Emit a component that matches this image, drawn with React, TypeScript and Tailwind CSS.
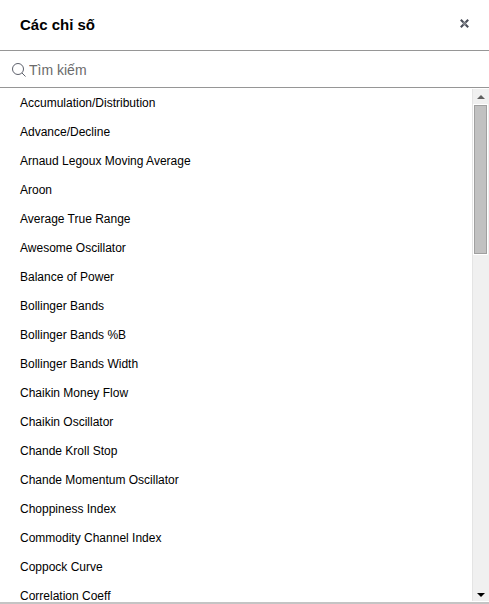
import { useRef, useState } from 'react';

const INDICATORS = [
  'Accumulation/Distribution',
  'Advance/Decline',
  'Arnaud Legoux Moving Average',
  'Aroon',
  'Average True Range',
  'Awesome Oscillator',
  'Balance of Power',
  'Bollinger Bands',
  'Bollinger Bands %B',
  'Bollinger Bands Width',
  'Chaikin Money Flow',
  'Chaikin Oscillator',
  'Chande Kroll Stop',
  'Chande Momentum Oscillator',
  'Choppiness Index',
  'Commodity Channel Index',
  'Coppock Curve',
  'Correlation Coeff',
];

function SearchIcon() {
  return (
    <svg width="14" height="14" viewBox="0 0 14 14" fill="none" stroke="#5d606b" aria-hidden="true">
      <circle cx="6" cy="6" r="5.5" />
      <path d="M10 10l3.5 3.5" />
    </svg>
  );
}

function CloseIcon() {
  return (
    <svg width="9" height="9" viewBox="0 0 9 9" aria-hidden="true">
      <path d="M0.8 0.8l7.4 7.4M8.2 0.8l-7.4 7.4" stroke="#4a4e59" strokeWidth="2.1" />
      <path d="M3 3l3 3M6 3l-3 3" stroke="#85888f" strokeWidth="1.2" />
    </svg>
  );
}

export default function App() {
  const [open, setOpen] = useState(true);
  const [query, setQuery] = useState('');
  const listRef = useRef<HTMLUListElement>(null);

  const items = INDICATORS.filter(name => name.toLowerCase().includes(query.toLowerCase()));

  const scrollList = (delta: number) => {
    listRef.current?.scrollBy({ top: delta });
  };

  if (!open) return null;

  return (
    <div className="flex h-screen flex-col border-b-2 border-[#c4c4c4] bg-white font-['Liberation_Sans',Arial,sans-serif] text-black">
      <header className="flex items-center justify-between border-b border-[#969696] px-5 py-3">
        <h1 className="text-[15px] leading-[26px] font-bold">Các chỉ số</h1>
        <button type="button" aria-label="Đóng" onClick={() => setOpen(false)} className="pb-1">
          <CloseIcon />
        </button>
      </header>

      <label className="flex items-center gap-[3px] border-b border-[#969696] pt-[9px] pr-5 pb-[7px] pl-3">
        <SearchIcon />
        <input
          type="text"
          aria-label="Tìm kiếm"
          placeholder="Tìm kiếm"
          value={query}
          onChange={e => setQuery(e.target.value)}
          className="min-w-0 flex-1 text-sm leading-5 outline-none placeholder:text-[#6b6b6b]"
        />
      </label>

      <div className="flex min-h-0 flex-1 py-px">
        <ul ref={listRef} className="min-w-0 flex-1 overflow-y-auto [scrollbar-width:none]">
          {items.map(name => (
            <li key={name}>
              <button type="button" className="block w-full px-5 text-left text-[12px] leading-[29px]">
                {name}
              </button>
            </li>
          ))}
        </ul>

        {/* Scroll track */}
        <div className="flex w-[17px] flex-col border-l border-[#e4e4e4] bg-[#f0f0f0] pr-[2px] pl-px">
          <button type="button" aria-label="Cuộn lên" onClick={() => scrollList(-29)} className="flex h-4 items-center justify-center">
            <svg width="8" height="4" viewBox="0 0 8 4" aria-hidden="true">
              <path d="M0 4l4-4 4 4z" fill="#606060" />
            </svg>
          </button>
          <div className="min-h-0 flex-1">
            <div className="h-[31%] border border-[#a0a0a0] bg-[#c1c1c1] shadow-[0_0_0_1px_#fff]" />
          </div>
          <button type="button" aria-label="Cuộn xuống" onClick={() => scrollList(29)} className="flex h-4 items-end justify-center pb-1">
            <svg width="8" height="4" viewBox="0 0 8 4" aria-hidden="true">
              <path d="M0 0l4 4 4-4z" fill="#000" />
            </svg>
          </button>
        </div>
      </div>
    </div>
  );
}
